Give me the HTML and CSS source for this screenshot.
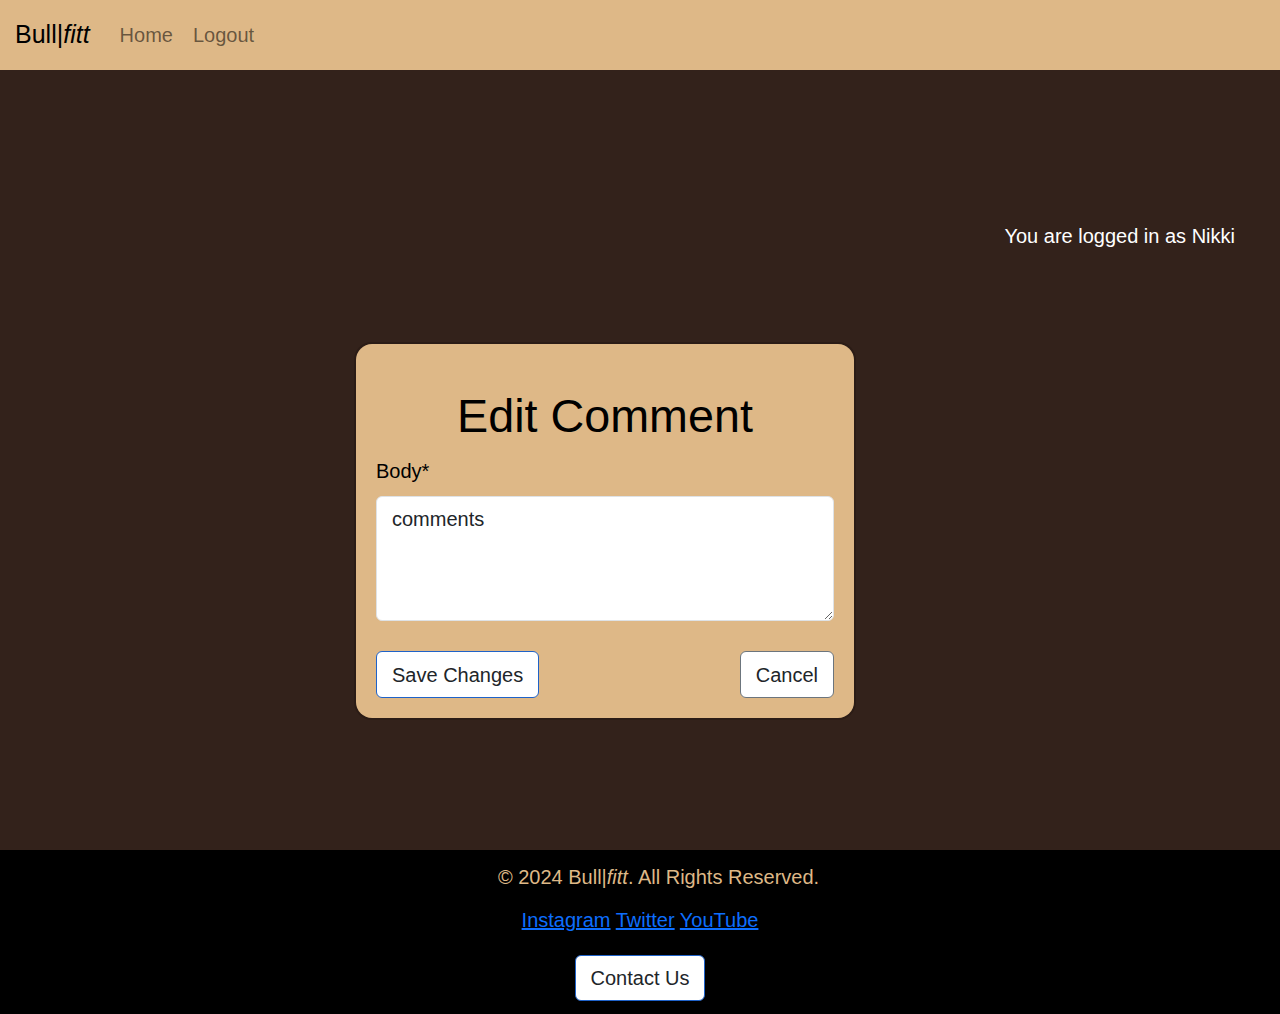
FILE: index.html
```html
<!DOCTYPE html>
<html lang="en">
<head>
<meta charset="utf-8">
<title>Edit Comment - Bull|fitt</title>
<link rel="stylesheet" href="styles.css">
</head>
<body>
<nav class="navbar">
  <a class="brand" href="#">Bull|<em>fitt</em></a>
  <a class="nav-link" href="#">Home</a>
  <a class="nav-link" href="#">Logout</a>
</nav>
<main class="main">
  <p class="logged">You are logged in as Nikki</p>
  <div class="card">
    <h1 class="title">Edit Comment</h1>
    <form class="form">
      <label class="label" for="body">Body*</label>
      <textarea id="body" class="textarea">comments</textarea>
      <div class="actions">
        <button type="button" class="btn btn-primary">Save Changes</button>
        <button type="button" class="btn btn-secondary">Cancel</button>
      </div>
    </form>
  </div>
</main>
<footer class="footer">
  <p class="copy">© 2024 Bull|<em>fitt</em>. All Rights Reserved.</p>
  <p class="links"><a href="#">Instagram</a> <a href="#">Twitter</a> <a href="#">YouTube</a></p>
  <button type="button" class="btn btn-primary">Contact Us</button>
</footer>
</body>
</html>
```
FILE: styles.css
```css
* { box-sizing: border-box; }
html { font-size: 20px; }
body {
  margin: 0;
  font-family: "Liberation Sans", Arial, sans-serif;
  font-size: 20px;
  line-height: 1.5;
  color: #212529;
  background: #33221b;
}
.navbar {
  height: 70px;
  background: #deb887;
  display: flex;
  align-items: center;
  padding: 0 15px;
}
.brand {
  font-size: 25px;
  color: #000;
  text-decoration: none;
  margin-right: 20px;
}
.nav-link {
  color: rgba(0,0,0,0.55);
  text-decoration: none;
  padding: 0 10px;
  font-size: 20px;
}
.main {
  height: 780px;
  display: flex;
  flex-direction: column;
  align-items: center;
}
.logged {
  align-self: flex-end;
  margin: 151px 45px 0 0;
  color: #fff;
}
.card {
  margin-top: 93px;
  margin-left: -70px;
  width: 498px;
  height: 374px;
  background: #deb887;
  border-radius: 16px;
  padding: 0 20px 20px;
  box-shadow: 0 0 0 2px #2b1c16;
}
.title {
  margin: 44px 0 10px;
  text-align: center;
  font-weight: 400;
  font-size: 46.7px;
  line-height: 1.2;
  color: #000;
}
.form { display: flex; flex-direction: column; }
.label {
  color: #000;
  margin: 2px 0 10px;
}
.textarea {
  height: 125px;
  width: 100%;
  padding: 6.5px 15px;
  font: inherit;
  color: #212529;
  border: 1px solid #dee2e6;
  border-radius: 6px;
  background: #fff;
}
.actions {
  display: flex;
  justify-content: space-between;
  margin-top: 30px;
}
.btn {
  font-family: inherit;
  font-size: 20px;
  line-height: 1.5;
  padding: 7.5px 15px;
  border-radius: 6px;
  background: #fff;
  color: #212529;
  cursor: pointer;
}
.btn-primary { border: 1px solid #1f62c8; }
.btn-secondary { border: 1px solid #6c757d; }
.footer {
  background: #000;
  height: 164px;
  text-align: center;
  padding-top: 12px;
}
.copy {
  margin: 0 0 13px;
  padding-left: 37px;
  color: #deb887;
}
.links {
  margin: 0 0 20px;
}
.links a { color: #0d6efd; }
.footer .btn { padding: 7px 15px; }
```
